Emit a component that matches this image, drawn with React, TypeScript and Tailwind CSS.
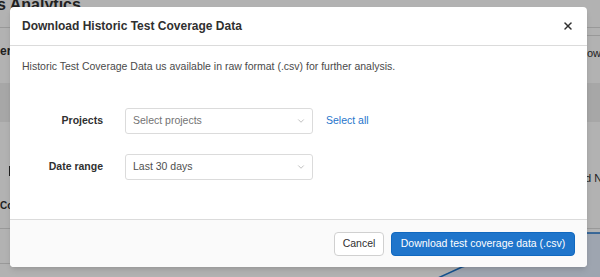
import React from "react";
import { ChevronDown, X } from "lucide-react";

function SelectBox({ value, placeholder }: { value?: string; placeholder?: string }) {
    return (
        <div className="flex h-[26px] w-[188px] items-center justify-between rounded-[3px] border border-[#dbdbdb] bg-white pl-[7px] pr-[6px]">
            <span className={value ? "text-[#4f4f4f]" : "text-[#737373]"}>{value ?? placeholder}</span>
            <ChevronDown size={10} strokeWidth={1.5} className="text-[#9a9a9a]" />
        </div>
    );
}

export default function App() {
    return (
        <div className="relative h-[277px] w-[600px] overflow-hidden bg-white font-['Liberation_Sans',Arial,sans-serif] text-[10.5px] text-[#303030]">
            {/* Page behind the modal */}
            <div className="flex flex-col">
                <div className="h-[28px] border-b border-[#dcdcdc]">
                    <div className="-ml-[3px] -mt-[3px] text-[16px] font-bold leading-[16px]">s Analytics</div>
                </div>
                <div className="flex h-[55px] justify-between">
                    <span className="pt-[14px] text-[12px] font-bold">er</span>
                    <div className="flex w-[13px] flex-col">
                        <div className="h-[8px] border-b border-[#dcdcdc]" />
                        <span className="pt-[9px] text-[11px] whitespace-nowrap">ow</span>
                    </div>
                </div>
                <div className="h-[39px] bg-[#f0f0f0]" />
                <div className="flex h-[106px] justify-between">
                    <div className="flex flex-col pt-[44px]">
                        <span className="ml-[9px] h-[10px] w-[1px] bg-[#303030]" />
                        <span className="pt-[22px] text-[10px] font-bold">Cov</span>
                    </div>
                    <span className="mt-[48px] w-[15px] overflow-hidden whitespace-nowrap text-[11px]">d N</span>
                </div>
                <div className="relative h-[49px] border-t border-[#dcdcdc]">
                    <div className="mt-[34px] h-[1px] w-[10px] bg-[#dcdcdc]" />
                    <svg width="600" height="48" className="absolute left-0 top-0">
                        <polygon points="438,48 462,38 587,4 600,4 600,48" fill="#e2edfd" />
                        <polyline points="438,49 462,38 587,4 600,4" fill="none" stroke="#1f75cb" strokeWidth="1.5" />
                    </svg>
                </div>
            </div>

            {/* Overlay */}
            <div className="absolute inset-0 bg-black/30" />

            {/* Modal */}
            <div className="absolute left-[10px] top-[7px] flex h-[260px] w-[577px] flex-col overflow-hidden rounded-[4px] bg-white shadow-md">
                <div className="flex h-[39px] shrink-0 items-center justify-between border-b border-[#dbdbdb] pl-[12px] pr-[13px]">
                    <h2 className="text-[12px] font-bold text-[#303030]">Download Historic Test Coverage Data</h2>
                    <X size={12} strokeWidth={3} className="text-[#303030]" />
                </div>

                <div className="flex-1 px-[12px] pt-[13px]">
                    <p className="leading-[14px] text-[#4a4a4a]">
                        Historic Test Coverage Data us available in raw format (.csv) for further analysis.
                    </p>
                    <div className="mt-[35px] flex flex-col gap-[20px]">
                        <div className="flex items-center">
                            <label className="w-[81px] text-right font-bold text-[#303030]">Projects</label>
                            <div className="ml-[22px]">
                                <SelectBox placeholder="Select projects" />
                            </div>
                            <span className="ml-[13px] text-[#1f75cb]">Select all</span>
                        </div>
                        <div className="flex items-center">
                            <label className="w-[81px] text-right font-bold text-[#303030]">Date range</label>
                            <div className="ml-[22px]">
                                <SelectBox value="Last 30 days" />
                            </div>
                        </div>
                    </div>
                </div>

                <div className="flex h-[48px] shrink-0 items-center justify-end gap-[7px] border-t border-[#dbdbdb] bg-[#fafafa] pr-[12px]">
                    <button className="h-[24px] w-[50px] rounded-[4px] border border-[#d0d0d0] bg-white text-[#303030]">
                        Cancel
                    </button>
                    <button className="h-[24px] w-[184px] rounded-[4px] border border-[#1068bf] bg-[#1f75cb] text-white">
                        Download test coverage data (.csv)
                    </button>
                </div>
            </div>
        </div>
    );
}
